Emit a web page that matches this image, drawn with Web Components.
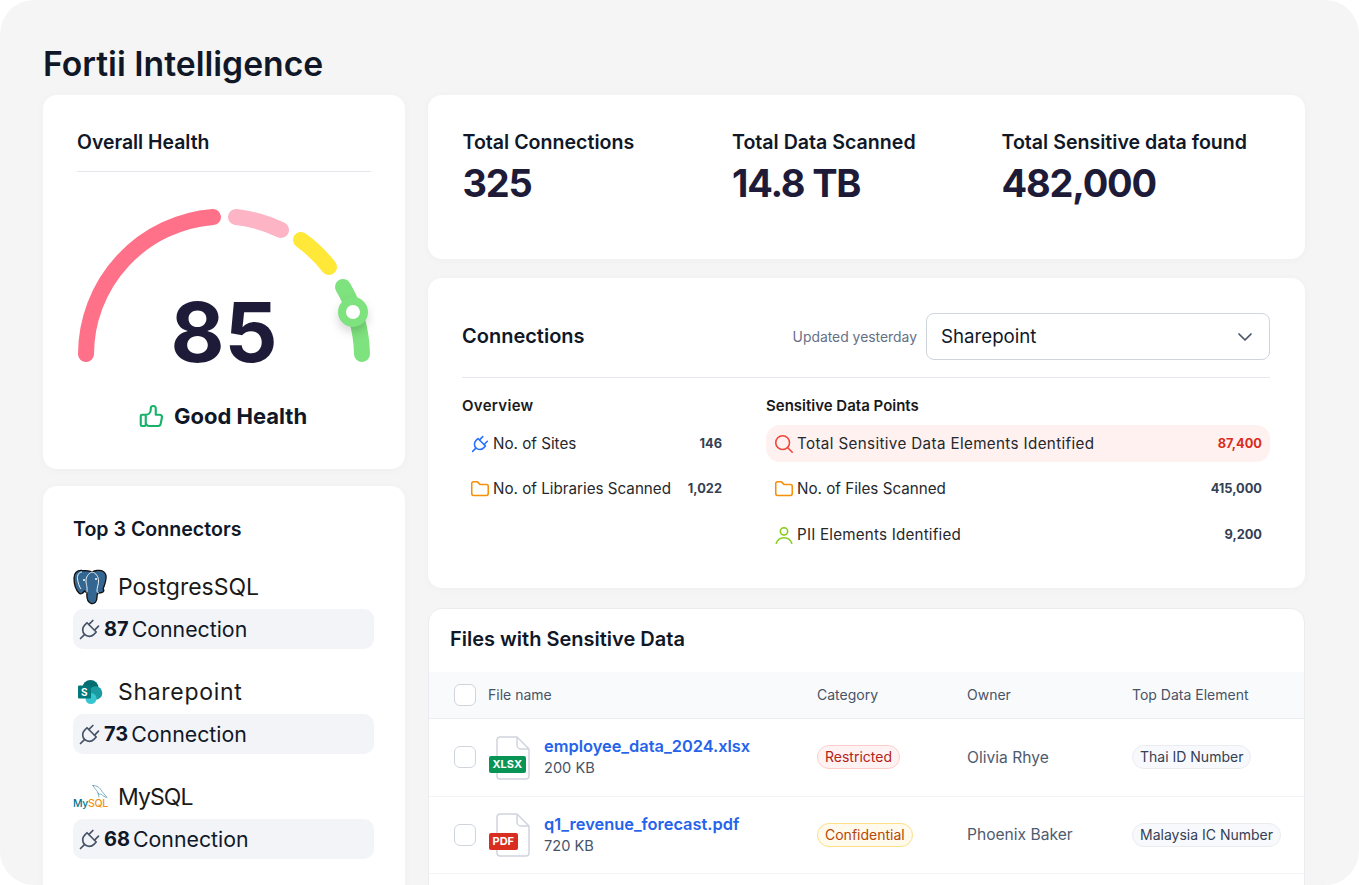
<!DOCTYPE html>
<html lang="en">
<head>
<meta charset="utf-8">
<title>Fortii Intelligence</title>
<style>
  html, body { margin: 0; background: #fff; height: 885px; overflow: hidden; }
</style>
</head>
<body>
<fortii-dashboard></fortii-dashboard>
<script>
const ICONS = {
  plug: '<path d="M9.785 6l8.215 8.215l-2.054 2.054a5.81 5.81 0 1 1 -8.215 -8.215l2.054 -2.054z"/><path d="M4 20l3.5 -3.5"/><path d="M15 4l-3.5 3.5"/><path d="M20 9l-3.5 3.5"/>',
  folder: '<path d="M5 4h4l3 3h7a2 2 0 0 1 2 2v8a2 2 0 0 1 -2 2h-14a2 2 0 0 1 -2 -2v-11a2 2 0 0 1 2 -2"/>',
  search: '<circle cx="10.5" cy="10.5" r="7.5"/><path d="M21 21l-5.2 -5.2"/>',
  user: '<circle cx="12" cy="8" r="4"/><path d="M3.5 21c1.5 -4 4.6 -6 8.5 -6s7 2 8.5 6"/>',
  thumb: '<path d="M7 11v8a1 1 0 0 1 -1 1h-2a1 1 0 0 1 -1 -1v-7a1 1 0 0 1 1 -1h3a4 4 0 0 0 4 -4v-1a2 2 0 0 1 4 0v5h3a2 2 0 0 1 2 2l-1 5a2 3 0 0 1 -2 2h-7a3 3 0 0 1 -3 -3"/>',
  chevron: '<path d="M6 9l6 6l6 -6"/>'
};

function icon(name, size, color, width = 2) {
  return `<svg width="${size}" height="${size}" viewBox="0 0 24 24" fill="none" stroke="${color}" stroke-width="${width}" stroke-linecap="round" stroke-linejoin="round">${ICONS[name]}</svg>`;
}

const LOGOS = {
  postgres: `<svg width="34" height="36" viewBox="0 0 34 36">
    <path d="M9 1.500C4 1 1 4 1 9c0 6 2 12 5 15 2 2 4 0 5.500-2 1 1 2 1.500 2.500 1.500-.5 4.500 0 9.500 4 11 4 1 6-2.500 6-6.500 0-2 .5-4 2-4 4 0 6-2 4-4 2-5 3.500-10 3-13.500C32 2.500 28 1 24 1.500c-2 .3-4 1-5 1.500-3-1.500-6-1.500-10-1.500z" fill="#336791" stroke="#111" stroke-width="1.300"/>
    <path d="M19 3c-4 1.500-6 5-6 9 0 3 1.500 5 1 11.500M19 3c4 1 6.500 4.500 6.500 9 0 4-1.500 6-1.500 10 0 1 1 2 2 2M9 3c-3 0-5 3-4.500 7 .5 4 2 8 3.500 10" fill="none" stroke="#fff" stroke-width=".9"/>
    <circle cx="11" cy="11" r="1" fill="#fff"/><circle cx="23" cy="10" r="1" fill="#fff"/>
  </svg>`,
  sharepoint: `<svg width="34" height="26" viewBox="0 0 34 26">
    <circle cx="17.500" cy="9" r="8" fill="#036c70"/>
    <circle cx="22.500" cy="14" r="6.800" fill="#1a9ba1"/>
    <circle cx="18" cy="19.500" r="5.500" fill="#37c6d0"/>
    <rect x="5" y="6.500" width="13" height="13" rx="1" fill="#03787c"/>
    <text x="11.500" y="17" font-family="Inter, sans-serif" font-size="10" font-weight="700" fill="#fff" text-anchor="middle">S</text>
  </svg>`,
  mysql: `<svg width="36" height="26" viewBox="0 0 36 26">
    <path d="M20 1.500c4 0 7 2 9 6l5 6c-2-.5-4-1.500-6-3.500-1 .5-2.500 .5-3-1-.5-2.500-3.500-4-5-7.500zM25 9l1 4" fill="none" stroke="#2f7f9b" stroke-width=".6" stroke-linecap="round" stroke-linejoin="round"/>
    <text x="0" y="23" font-family="Inter, sans-serif" font-size="10.500" font-weight="500" letter-spacing="-.3"><tspan fill="#00758f">My</tspan><tspan fill="#f29111">SQL</tspan></text>
  </svg>`
};

class DashCard extends HTMLElement {
  constructor() {
    super();
    this.attachShadow({ mode: 'open' }).innerHTML = `
      <style>
        :host {
          display: block;
          box-sizing: border-box;
          background: #fff;
          border-radius: 14px;
          box-shadow: 0 1px 8px rgba(16, 24, 40, 0.03);
        }
      </style>
      <slot></slot>
    `;
  }
}

class HealthGauge extends HTMLElement {
  constructor() {
    super();
    this.attachShadow({ mode: 'open' }).innerHTML = `
      <style>
        :host { display: block; position: relative; width: 294px; height: 180px; }
        svg { display: block; overflow: visible; }
        .score {
          position: absolute;
          left: 0;
          right: 0;
          top: 101px;
          text-align: center;
          font: 700 83px/83px Inter, sans-serif;
          color: #1e1b39;
        }
        .knob { filter: drop-shadow(0 5px 5px rgba(0, 0, 0, 0.16)); }
      </style>
      <svg width="294" height="180" viewBox="77 190 294 180" fill="none" stroke-width="16" stroke-linecap="round">
        <path d="M86 354A138 138 0 0 1 213 217" stroke="#ff7089"/>
        <path d="M236 217A138 138 0 0 1 281 230" stroke="#fdb4c5"/>
        <path d="M301 240A138 138 0 0 1 329 267" stroke="#ffe838"/>
        <path d="M343 287A138 138 0 0 1 362 354" stroke="#7ee27e"/>
        <g class="knob">
          <circle cx="353" cy="312" r="11" stroke="#7ee27e" stroke-width="8" fill="#fff"/>
        </g>
      </svg>
      <div class="score"><slot></slot></div>
    `;
  }
}

class OverallHealth extends HTMLElement {
  constructor() {
    super();
    this.attachShadow({ mode: 'open' }).innerHTML = `
      <style>
        :host { display: block; padding: 33px 34px 0; height: 374px; box-sizing: border-box; }
        h2 {
          margin: 0;
          padding-bottom: 15px;
          border-bottom: 1px solid #e4e7ec;
          font: 600 19.400px/28px Inter, sans-serif;
          color: #101828;
        }
        health-gauge { margin-top: 18px; }
        .status {
          display: flex;
          align-items: center;
          justify-content: center;
          gap: 7px;
          margin-top: 31px;
          padding-right: 4px;
          font: 700 22px/30px Inter, sans-serif;
          color: #101828;
        }
        svg { display: block; }
      </style>
      <h2>Overall Health</h2>
      <health-gauge>85</health-gauge>
      <div class="status">${icon('thumb', 30, '#17b26a', 1.7)}<span>Good Health</span></div>
    `;
  }
}

class ConnectorItem extends HTMLElement {
  constructor() {
    super();
    const logo = LOGOS[this.getAttribute('logo')];
    this.attachShadow({ mode: 'open' }).innerHTML = `
      <style>
        :host { display: block; }
        .name {
          display: flex;
          align-items: center;
          height: 36px;
          margin-bottom: 4px;
          font: 400 23px/36px Inter, sans-serif;
          color: #1a1a1a;
        }
        .logo { width: 45px; flex: none; display: flex; }
        .chip {
          display: flex;
          align-items: center;
          height: 40px;
          padding-left: 2.500px;
          border-radius: 10px;
          background: #f2f4f8;
          color: #101828;
          letter-spacing: 0;
          font: 400 21.300px/42px Inter, sans-serif;
        }
        .chip svg { display: block; margin-right: 1.500px; }
        b { font-weight: 700; font-size: 20px; margin-right: 3px; }
      </style>
      <div class="name"><span class="logo">${logo}</span><slot></slot></div>
      <div class="chip">${icon('plug', 27, '#475467', 1.5)}<b>${this.getAttribute('count')}</b>Connection</div>
    `;
  }
}

class TopConnectors extends HTMLElement {
  constructor() {
    super();
    this.attachShadow({ mode: 'open' }).innerHTML = `
      <style>
        :host { display: block; padding: 31px 31px 40px 30px; }
        h2 {
          margin: 0 0 28px;
          font: 600 19.600px/24px Inter, sans-serif;
          color: #101828;
        }
        ::slotted(connector-item) { margin-bottom: 25px; }
      </style>
      <h2>Top 3 Connectors</h2>
      <slot></slot>
    `;
  }
}

class StatBlock extends HTMLElement {
  constructor() {
    super();
    this.attachShadow({ mode: 'open' }).innerHTML = `
      <style>
        :host { display: block; }
        .label { font: 600 19.600px/28px Inter, sans-serif; color: #101828; white-space: nowrap; }
        .value { margin-top: 7px; font: 700 38px/40px Inter, sans-serif; letter-spacing: -1.200px; color: #1e1b39; }
      </style>
      <div class="label">${this.getAttribute('label')}</div>
      <div class="value"><slot></slot></div>
    `;
  }
}

class MetricRow extends HTMLElement {
  constructor() {
    super();
    const icons = { plug: '#2970ff', folder: '#f79009', search: '#f04438', user: '#84cc16' };
    const name = this.getAttribute('icon');
    const alert = this.hasAttribute('alert');
    this.attachShadow({ mode: 'open' }).innerHTML = `
      <style>
        :host {
          display: flex;
          align-items: center;
          height: 37px;
          padding: 0 8px 0 7px;
          border-radius: 14px;
          background: ${alert ? '#fef1f0' : 'transparent'};
          font: 400 15.200px/20px Inter, sans-serif;
          color: #26282c;
        }
        svg { display: block; flex: none; margin-right: 2px; }
        .label { flex: 1; white-space: nowrap; }
        .num { font-weight: 700; font-size: 12.800px; letter-spacing: 0; color: ${alert ? '#d92d20' : '#344054'}; }
      </style>
      ${icon(name, 22, icons[name], 1.7)}
      <span class="label"><slot></slot></span>
      <span class="num">${this.getAttribute('value')}</span>
    `;
  }
}

class ConnectionsPanel extends HTMLElement {
  constructor() {
    super();
    this.attachShadow({ mode: 'open' }).innerHTML = `
      <style>
        :host { display: block; height: 310px; box-sizing: border-box; padding: 35px 35px 0 34px; }
        .head {
          display: flex;
          align-items: center;
          padding-bottom: 17px;
          border-bottom: 1px solid #e4e7ec;
        }
        h2 { flex: 1; margin: 0; font: 600 20px/47px Inter, sans-serif; color: #101828; }
        .updated { margin-right: 9px; font: 400 13.900px/20px Inter, sans-serif; color: #667085; }
        .select {
          display: flex;
          align-items: center;
          justify-content: space-between;
          box-sizing: border-box;
          width: 344px;
          height: 47px;
          padding: 0 12px 0 14px;
          border: 1px solid #d0d5dd;
          border-radius: 8px;
          font: 400 18.700px/24px Inter, sans-serif;
          color: #101828;
        }
        .select svg { display: block; }
        .cols {
          display: grid;
          grid-template-columns: 268px 504px;
          column-gap: 36px;
          margin-top: 18px;
        }
        h3 { margin: 0 0 9px; font: 600 15px/20px Inter, sans-serif; color: #1a1a1a; }
        .wide { letter-spacing: 0.3px; }
        .list { display: flex; flex-direction: column; gap: 8.700px; }
      </style>
      <div class="head">
        <h2>Connections</h2>
        <span class="updated">Updated yesterday</span>
        <div class="select">Sharepoint ${icon('chevron', 24, '#475467', 1.7)}</div>
      </div>
      <div class="cols">
        <div>
          <h3 class="wide">Overview</h3>
          <div class="list"><slot name="overview"></slot></div>
        </div>
        <div>
          <h3>Sensitive Data Points</h3>
          <div class="list"><slot name="sensitive"></slot></div>
        </div>
      </div>
    `;
  }
}

class FileIcon extends HTMLElement {
  constructor() {
    super();
    const type = this.getAttribute('type');
    this.attachShadow({ mode: 'open' }).innerHTML = `
      <style>
        :host { display: block; position: relative; width: 42px; height: 44px; flex: none; }
        svg { display: block; position: absolute; left: 7px; top: 0; }
        .tag {
          position: absolute;
          left: 0;
          top: 20px;
          padding: 0 3.500px;
          border-radius: 2px;
          background: ${type === 'PDF' ? '#d92d20' : '#079455'};
          font: 700 11px/17px Inter, sans-serif;
          color: #fff;
        }
      </style>
      <svg width="34" height="44" viewBox="0 0 34 44" fill="none" stroke="#d0d5dd" stroke-width="1.500" stroke-linejoin="round">
        <path d="M4 1h17l12 12v27a3 3 0 0 1-3 3H4a3 3 0 0 1-3-3V4a3 3 0 0 1 3-3z"/>
        <path d="M21 1v8a4 4 0 0 0 4 4h8"/>
      </svg>
      <span class="tag">${type}</span>
    `;
  }
}

const ROW_STYLE = `
  :host {
    display: grid;
    grid-template-columns: 363px 150px 165px 1fr;
    box-sizing: border-box;
    font-family: Inter, sans-serif;
  }
  .cell { display: flex; align-items: center; padding-left: 25px; box-sizing: border-box; }
  .cell:first-child { border-right: 2px solid #f2f4f7; }
  .check {
    flex: none;
    box-sizing: border-box;
    width: 22px;
    height: 22px;
    border: 1.5px solid #d0d5dd;
    border-radius: 6px;
    background: #fff;
  }
`;

class FileHead extends HTMLElement {
  constructor() {
    super();
    this.attachShadow({ mode: 'open' }).innerHTML = `
      <style>
        ${ROW_STYLE}
        :host {
          height: 47px;
          background: #f9fafb;
          border-bottom: 1px solid #eaecf0;
          font-size: 14px;
          color: #475467;
        }
        .check { margin-right: 12px; }
        .t { margin-top: -2px; }
      </style>
      <div class="cell"><span class="check"></span><span class="t">File name</span></div>
      <div class="cell"><span class="t">Category</span></div>
      <div class="cell"><span class="t">Owner</span></div>
      <div class="cell"><span class="t">Top Data Element</span></div>
    `;
  }
}

class FileRow extends HTMLElement {
  constructor() {
    super();
    const empty = !this.hasAttribute('name');
    const tones = {
      Restricted: 'background:#fef3f2;border-color:#fecdca;color:#b42318',
      Confidential: 'background:#fffaeb;border-color:#fedf89;color:#b54708'
    };
    const category = this.getAttribute('category');
    this.attachShadow({ mode: 'open' }).innerHTML = `
      <style>
        ${ROW_STYLE}
        :host { height: 77.500px; border-bottom: 1.500px solid #f2f4f7; }
        .check { margin-right: 13px; }
        file-icon { margin-right: 13px; margin-top: 1px; }
        .text { padding-top: 1px; }
        .name { font-size: 16.400px; line-height: 22px; font-weight: 600; color: #2563eb; white-space: nowrap; }
        .size { font-size: 14.600px; line-height: 23px; color: #475467; }
        .badge {
          box-sizing: border-box;
          height: 24px;
          padding: 0 7px;
          border: 1px solid;
          border-radius: 12px;
          font-size: 14px;
          line-height: 22px;
          white-space: nowrap;
        }
        .owner { font-size: 15.600px; color: #4f5b6e; white-space: nowrap; }
        .el { background: #f8f9fc; border-color: #eaecf0; color: #344054; }
      </style>
      ${empty ? '<div class="cell"></div>' : `
      <div class="cell">
        <span class="check"></span>
        <file-icon type="${this.getAttribute('type')}"></file-icon>
        <div class="text">
          <div class="name">${this.getAttribute('name')}</div>
          <div class="size">${this.getAttribute('size')}</div>
        </div>
      </div>
      <div class="cell"><span class="badge" style="${tones[category]}">${category}</span></div>
      <div class="cell"><span class="owner">${this.getAttribute('owner')}</span></div>
      <div class="cell"><span class="badge el">${this.getAttribute('element')}</span></div>`}
    `;
  }
}

class FilesTable extends HTMLElement {
  constructor() {
    super();
    this.attachShadow({ mode: 'open' }).innerHTML = `
      <style>
        :host {
          display: block;
          margin-top: 1px;
          background: #fff;
          border: 1px solid #eaecf0;
          border-radius: 14px;
          overflow: hidden;
        }
        h2 { margin: 0; padding-left: 21px; font: 600 20px/61px Inter, sans-serif; padding-bottom: 2px; color: #101828; }
      </style>
      <h2>Files with Sensitive Data</h2>
      <slot></slot>
    `;
  }
}

class FortiiDashboard extends HTMLElement {
  constructor() {
    super();
    this.attachShadow({ mode: 'open' }).innerHTML = `
      <style>
        :host {
          display: block;
          box-sizing: border-box;
          height: 885px;
          padding: 38px 54px 0 43px;
          overflow: hidden;
          border-radius: 34px;
          background: #f5f5f5;
          font-family: Inter, sans-serif;
        }
        h1 {
          margin: 0 0 6px;
          font: 600 33.700px/51px Inter, sans-serif;
          color: #101828;
        }
        .layout {
          display: grid;
          grid-template-columns: 362px 877px;
          column-gap: 23px;
          align-items: start;
        }
        .left { display: flex; flex-direction: column; gap: 17px; }
        .right { display: flex; flex-direction: column; gap: 19px; }
        .stats {
          display: grid;
          grid-template-columns: 269.500px 269.500px 1fr;
          height: 164px;
          box-sizing: border-box;
          padding: 33px 0 0 34.500px;
        }
      </style>
      <h1>Fortii Intelligence</h1>
      <div class="layout">
        <div class="left">
          <dash-card><overall-health></overall-health></dash-card>
          <dash-card>
            <top-connectors>
              <connector-item logo="postgres" count="87">PostgresSQL</connector-item>
              <connector-item logo="sharepoint" count="73" style="letter-spacing:.7px">Sharepoint</connector-item>
              <connector-item logo="mysql" count="68" style="letter-spacing:-.9px">MySQL</connector-item>
            </top-connectors>
          </dash-card>
        </div>
        <div class="right">
          <dash-card>
            <div class="stats">
              <stat-block label="Total Connections">325</stat-block>
              <stat-block label="Total Data Scanned">14.8 TB</stat-block>
              <stat-block label="Total Sensitive data found">482,000</stat-block>
            </div>
          </dash-card>
          <dash-card>
            <connections-panel>
              <metric-row slot="overview" icon="plug" value="146">No. of Sites</metric-row>
              <metric-row slot="overview" icon="folder" value="1,022">No. of Libraries Scanned</metric-row>
              <metric-row slot="sensitive" icon="search" value="87,400" alert style="letter-spacing:.36px">Total Sensitive Data Elements Identified</metric-row>
              <metric-row slot="sensitive" icon="folder" value="415,000">No. of Files Scanned</metric-row>
              <metric-row slot="sensitive" icon="user" value="9,200" style="letter-spacing:.2px">PII Elements Identified</metric-row>
            </connections-panel>
          </dash-card>
          <files-table>
            <file-head></file-head>
            <file-row type="XLSX" name="employee_data_2024.xlsx" size="200 KB" category="Restricted" owner="Olivia Rhye" element="Thai ID Number"></file-row>
            <file-row type="PDF" name="q1_revenue_forecast.pdf" size="720 KB" category="Confidential" owner="Phoenix Baker" element="Malaysia IC Number"></file-row>
            <file-row></file-row>
          </files-table>
        </div>
      </div>
    `;
  }
}

customElements.define('dash-card', DashCard);
customElements.define('health-gauge', HealthGauge);
customElements.define('overall-health', OverallHealth);
customElements.define('connector-item', ConnectorItem);
customElements.define('top-connectors', TopConnectors);
customElements.define('stat-block', StatBlock);
customElements.define('metric-row', MetricRow);
customElements.define('connections-panel', ConnectionsPanel);
customElements.define('file-icon', FileIcon);
customElements.define('file-head', FileHead);
customElements.define('file-row', FileRow);
customElements.define('files-table', FilesTable);
customElements.define('fortii-dashboard', FortiiDashboard);
</script>
</body>
</html>
